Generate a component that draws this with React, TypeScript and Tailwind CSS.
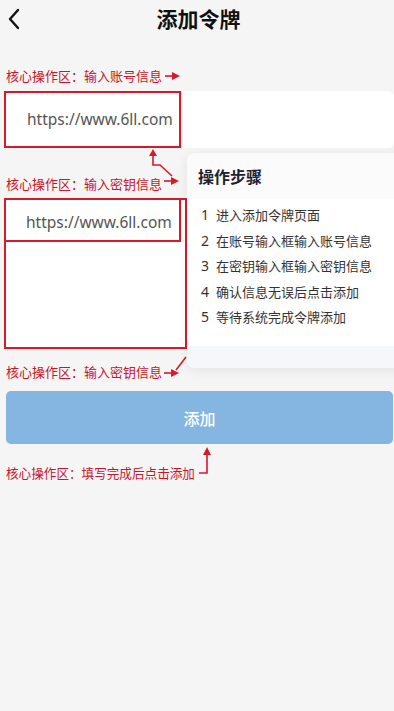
import React from "react";

const RED = "#d51a2b";

function Label({ children, size = "text-[13px]" }: { children: React.ReactNode; size?: string }) {
  return (
    <div className={`pl-[6px] ${size} leading-[18px] text-[#c8162a] font-['Noto_Sans_CJK_SC',sans-serif] whitespace-nowrap`}>
      {children}
    </div>
  );
}

export default function App() {
  const steps = [
    "进入添加令牌页面",
    "在账号输入框输入账号信息",
    "在密钥输入框输入密钥信息",
    "确认信息无误后点击添加",
    "等待系统完成令牌添加",
  ];
  return (
    <div className="relative w-[394px] min-h-[711px] overflow-hidden bg-[#f5f5f5] font-['Noto_Sans_CJK_SC',sans-serif]">
      {/* Header */}
      <div className="relative flex h-[36px] items-center justify-center">
        <svg className="absolute left-[6px] top-[7px]" width="16" height="24" viewBox="0 0 16 24">
          <polyline points="12,3 4,12 12,21" fill="none" stroke="#111" strokeWidth="2.4" strokeLinecap="round" strokeLinejoin="round" />
        </svg>
        <div className="pl-[3px] text-[21px] font-bold leading-[36px] text-[#111]">添加令牌</div>
      </div>

      <div className="mt-[31px]">
        <Label>核心操作区：输入账号信息</Label>
      </div>

      {/* Account input row */}
      <div className="mt-[6px] flex h-[57px] pl-[4px]">
        <div className="flex w-[177px] items-center border-2 border-[#d51a2b] bg-white pl-[21px]">
          <span className="font-['Noto_Sans',sans-serif] text-[15.5px] text-[#555]">https://www.6ll.com</span>
        </div>
        <div className="ml-[2px] flex-1 rounded-r-[6px] bg-white" />
      </div>

      <div className="mt-[27px]">
        <Label>核心操作区：输入密钥信息</Label>
      </div>

      {/* Secret input box */}
      <div className="mt-[5px] ml-[4px] h-[151px] w-[183px] border-2 border-[#d51a2b] bg-white">
        <div className="flex h-[42px] w-[175px] items-center border-r-2 border-b-2 border-[#d51a2b] pl-[20px] pt-[6px]">
          <span className="font-['Noto_Sans',sans-serif] text-[15.5px] text-[#555]">https://www.6ll.com</span>
        </div>
      </div>

      <div className="mt-[14px]">
        <Label>核心操作区：输入密钥信息</Label>
      </div>

      {/* Button */}
      <div className="mt-[10px] ml-[6px] flex h-[53px] w-[387px] items-center justify-center rounded-[5px] bg-[#85b5e1]">
        <span className="text-[16px] font-medium text-white">添加</span>
      </div>

      <div className="mt-[20px]">
        <Label size="text-[12.6px]">核心操作区：填写完成后点击添加</Label>
      </div>

      {/* Steps card */}
      <div className="absolute left-[187px] top-[153px] flex h-[215px] w-[220px] flex-col overflow-hidden rounded-[8px] bg-white shadow-[0_2px_12px_rgba(0,0,0,0.08)]">
        <div className="flex h-[46px] items-center bg-[#fbfbfc] pl-[11px]">
          <span className="text-[16px] font-bold text-[#1e2030]">操作步骤</span>
        </div>
        <div className="flex-1 pl-[14px] pt-[3px]">
          {steps.map((s, i) => (
            <div key={i} className="flex text-[13px] leading-[25.5px] text-[#333] whitespace-nowrap">
              <span className="w-[15px] font-['Noto_Sans',sans-serif] text-[14px]">{i + 1}</span>
              <span>{s}</span>
            </div>
          ))}
        </div>
        <div className="h-[22px] bg-[#f5f7fa]" />
      </div>

      {/* Annotation arrows */}
      <svg className="pointer-events-none absolute left-0 top-0" width="394" height="711" viewBox="0 0 394 711">
        <g stroke={RED} strokeWidth="1.6" fill="none">
          <line x1="165" y1="76" x2="174" y2="76" />
          <polyline points="153,153 153,165 160,165 172,176" />
          <line x1="164" y1="181" x2="173" y2="181" />
          <line x1="164" y1="373" x2="173" y2="373" />
          <line x1="176" y1="370" x2="186" y2="357" />
          <polyline points="199,473 207,473 207,454" />
        </g>
        <g fill={RED}>
          <polygon points="180,76 172,72 172,80" />
          <polygon points="153,149 149,156 157,156" />
          <polygon points="179,181 171,177 171,185" />
          <polygon points="179,373 171,369 171,377" />
          <polygon points="207,447 203,455 211,455" />
        </g>
      </svg>
    </div>
  );
}
